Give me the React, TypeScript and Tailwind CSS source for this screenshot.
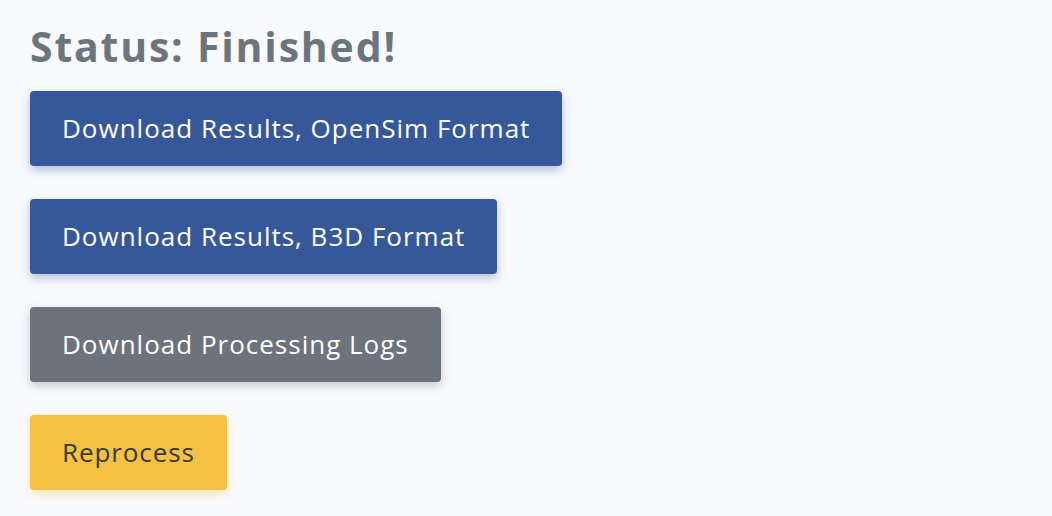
export default function App() {
  const font = { fontFamily: "'Open Sans', Lato, sans-serif" };
  return (
    <div className="min-h-[516px] w-full bg-[#f9fafe] px-[30px] pt-[18px]" style={font}>
      <h2 className="text-[41px] font-bold leading-[56px] tracking-[1.8px] text-[#6c757d]">Status: Finished!</h2>
      <div className="mt-[17px] flex flex-col items-start gap-[33px]">
        <button className="h-[75px] rounded-[4px] bg-[#37579b] px-[32px] text-[26px] tracking-[1px] text-white shadow-[0_4px_10px_rgba(55,87,155,0.35)]">
          Download Results, OpenSim Format
        </button>
        <button className="h-[75px] rounded-[4px] bg-[#37579b] px-[32px] text-[26px] tracking-[1px] text-white shadow-[0_4px_10px_rgba(55,87,155,0.35)]">
          Download Results, B3D Format
        </button>
        <button className="h-[75px] rounded-[4px] bg-[#6c737c] px-[32px] text-[26px] tracking-[1px] text-white shadow-[0_4px_10px_rgba(108,115,124,0.35)]">
          Download Processing Logs
        </button>
        <button className="h-[75px] rounded-[4px] bg-[#f6c142] px-[32px] text-[26px] tracking-[0.9px] text-[#343a40] shadow-[0_4px_10px_rgba(246,193,66,0.35)]">
          Reprocess
        </button>
      </div>
    </div>
  );
}
